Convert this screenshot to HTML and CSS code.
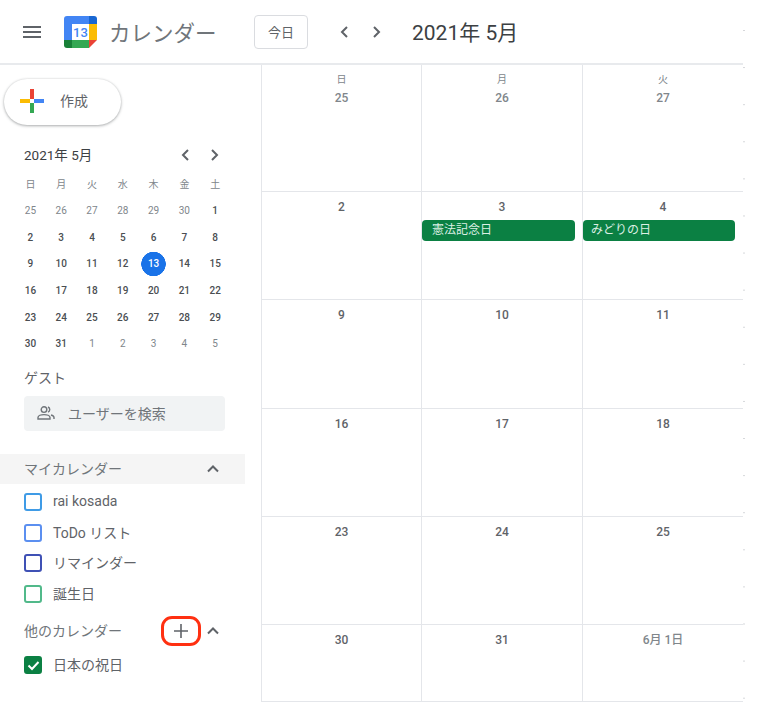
FILE: index.html
```html
<!DOCTYPE html>
<html lang="ja">
<head>
    <meta charset="utf-8">
    <title>カレンダー</title>
    <link rel="stylesheet" href="styles.css">
</head>
<body>
    <div class="app">
        <div class="content">
            <header class="topbar">
                <svg class="menu-icon" width="18" height="12" viewBox="0 0 18 12"><path d="M0 0h18v2H0zM0 5h18v2H0zM0 10h18v2H0z" fill="#5f6368"/></svg>
                <svg class="logo" width="33" height="32" viewBox="0 0 33 32">
                    <path d="M3 0h22v8H8v16H0V3a3 3 0 0 1 3-3z" fill="#4285f4"/>
                    <path d="M25 0h5a3 3 0 0 1 3 3v5h-8z" fill="#1967d2"/>
                    <path d="M25 8h8v16h-8z" fill="#fbbc04"/>
                    <path d="M8 24h17v8H8z" fill="#34a853"/>
                    <path d="M0 24h8v8H3a3 3 0 0 1-3-3z" fill="#188038"/>
                    <path d="M25 24h8l-8 8z" fill="#ea4335"/>
                    <path d="M8 8h17v16H8z" fill="#fff"/>
                    <text x="16.5" y="21" text-anchor="middle" class="logo-num">13</text>
                </svg>
                <span class="app-name">カレンダー</span>
                <button class="today-btn">今日</button>
                <svg class="nav-chevron first" width="8" height="12" viewBox="0 0 8 12"><path d="M7 1L2 6l5 5" class="chevron-line"/></svg>
                <svg class="nav-chevron" width="8" height="12" viewBox="0 0 8 12"><path d="M1 1l5 5-5 5" class="chevron-line"/></svg>
                <span class="month-title">2021年 5月</span>
            </header>

            <div class="main">
                <aside class="sidebar">
                    <button class="create-btn">
                        <svg width="24" height="24" viewBox="0 0 24 24">
                            <path d="M10 10h4V0h-4z" fill="#ea4335"/>
                            <path d="M14 10v4h10v-4z" fill="#4285f4"/>
                            <path d="M10 14h4v10h-4z" fill="#34a853"/>
                            <path d="M0 10v4h10v-4z" fill="#fbbc04"/>
                        </svg>
                        <span class="create-label">作成</span>
                    </button>

                    <div class="mini-head">
                        <span class="mini-title">2021年 5月</span>
                        <svg width="8" height="12" viewBox="0 0 8 12"><path d="M7 1L2 6l5 5" class="chevron-line"/></svg>
                        <svg width="8" height="12" viewBox="0 0 8 12"><path d="M1 1l5 5-5 5" class="chevron-line"/></svg>
                    </div>
                    <div class="mini-grid">
                        <span class="wd">日</span><span class="wd">月</span><span class="wd">火</span><span class="wd">水</span><span class="wd">木</span><span class="wd">金</span><span class="wd">土</span>
                        <span class="off">25</span><span class="off">26</span><span class="off">27</span><span class="off">28</span><span class="off">29</span><span class="off">30</span><span>1</span>
                        <span>2</span><span>3</span><span>4</span><span>5</span><span>6</span><span>7</span><span>8</span>
                        <span>9</span><span>10</span><span>11</span><span>12</span><span class="today">13</span><span>14</span><span>15</span>
                        <span>16</span><span>17</span><span>18</span><span>19</span><span>20</span><span>21</span><span>22</span>
                        <span>23</span><span>24</span><span>25</span><span>26</span><span>27</span><span>28</span><span>29</span>
                        <span>30</span><span>31</span><span class="off">1</span><span class="off">2</span><span class="off">3</span><span class="off">4</span><span class="off">5</span>
                    </div>

                    <div class="guest-label">ゲスト</div>
                    <div class="guest-search">
                        <svg width="18" height="14" viewBox="0 0 18 14" fill="none" stroke="#70757a" stroke-width="1.4">
                            <circle cx="7" cy="3.6" r="2.8"/>
                            <path d="M1 13v-1.4C1 9.8 4 8.6 7 8.6s6 1.2 6 3V13z"/>
                            <path d="M11 1a2.8 2.8 0 0 1 0 5.2M14 9c1.6.5 3 1.3 3 2.6V13"/>
                        </svg>
                        <span>ユーザーを検索</span>
                    </div>

                    <div class="section-head active">
                        <span>マイカレンダー</span>
                        <svg class="up-chevron" width="12" height="8" viewBox="0 0 12 8"><path d="M1 6.5l5-5 5 5" class="chevron-line"/></svg>
                    </div>
                    <ul class="cal-list">
                        <li><i class="check sky"></i>rai kosada</li>
                        <li><i class="check blue"></i>ToDo リスト</li>
                        <li><i class="check indigo"></i>リマインダー</li>
                        <li><i class="check mint"></i>誕生日</li>
                    </ul>

                    <div class="section-head other">
                        <span>他のカレンダー</span>
                        <div class="add-btn">
                            <svg width="14" height="14" viewBox="0 0 14 14"><path d="M6.2 0h1.6v14H6.2zM0 6.2h14v1.6H0z" fill="#5f6368"/></svg>
                        </div>
                        <svg class="up-chevron" width="12" height="8" viewBox="0 0 12 8"><path d="M1 6.5l5-5 5 5" class="chevron-line"/></svg>
                    </div>
                    <ul class="cal-list holidays">
                        <li>
                            <i class="check green">
                                <svg width="13" height="11" viewBox="0 0 13 11"><path d="M1.5 5.5l3.5 3.5 6.5-7" fill="none" stroke="#fff" stroke-width="2"/></svg>
                            </i>日本の祝日
                        </li>
                    </ul>
                </aside>

                <section class="month">
                    <div class="cell first-row"><span class="wk">日</span><span class="date off">25</span></div>
                    <div class="cell first-row"><span class="wk">月</span><span class="date off">26</span></div>
                    <div class="cell first-row"><span class="wk">火</span><span class="date off">27</span></div>

                    <div class="cell"><span class="date">2</span></div>
                    <div class="cell"><span class="date">3</span><div class="event">憲法記念日</div></div>
                    <div class="cell"><span class="date">4</span><div class="event short">みどりの日</div></div>

                    <div class="cell"><span class="date">9</span></div>
                    <div class="cell"><span class="date">10</span></div>
                    <div class="cell"><span class="date">11</span></div>

                    <div class="cell"><span class="date">16</span></div>
                    <div class="cell"><span class="date">17</span></div>
                    <div class="cell"><span class="date">18</span></div>

                    <div class="cell"><span class="date">23</span></div>
                    <div class="cell"><span class="date">24</span></div>
                    <div class="cell"><span class="date">25</span></div>

                    <div class="cell"><span class="date">30</span></div>
                    <div class="cell"><span class="date">31</span></div>
                    <div class="cell"><span class="date off">6月 1日</span></div>
                </section>
            </div>
        </div>
        <div class="edge-dots"></div>
    </div>
</body>
</html>
```

FILE: styles.css
```css
* {
    box-sizing: border-box;
}

body {
    margin: 0;
    background-color: #fff;
    color: #5f6368;
    font-family: 'Roboto', 'Noto Sans CJK JP', sans-serif;
    overflow: hidden;
}

.app {
    display: flex;
    width: 774px;
    height: 702px;
    overflow: hidden;
}

.content {
    width: 743px;
    flex-shrink: 0;
}

.edge-dots {
    width: 2px;
    height: 702px;
    background-image: linear-gradient(to bottom, #d5d7da 1px, transparent 1px);
    background-size: 2px 37.1px;
    background-position: 0 30px;
}

.chevron-line {
    fill: none;
    stroke: #5f6368;
    stroke-width: 2;
}

/* top bar */
.topbar {
    height: 65px;
    display: flex;
    align-items: center;
    padding-left: 23px;
    border-bottom: 2px solid #e8eaed;
}

.logo {
    margin-left: 23px;
}

.logo-num {
    font-size: 13px;
    font-weight: 500;
    fill: #4285f4;
}

.app-name {
    width: 145px;
    margin-left: 12px;
    font-size: 21.5px;
    color: #70757a;
}

.today-btn {
    width: 54px;
    height: 34px;
    padding: 0;
    background: #fff;
    border: 1px solid #dadce0;
    border-radius: 4px;
    font-family: inherit;
    font-size: 13px;
    color: #5f6368;
}

.nav-chevron {
    margin-left: 25px;
}

.nav-chevron.first {
    margin-left: 32px;
}

.month-title {
    margin: 0 0 2px 31px;
    font-size: 21px;
    color: #3c4043;
}

.main {
    display: flex;
    height: 637px;
}

/* sidebar */
.sidebar {
    width: 261px;
    flex-shrink: 0;
}

.create-btn {
    display: flex;
    align-items: center;
    gap: 16px;
    width: 117px;
    height: 46px;
    margin: 14px 0 0 4px;
    padding: 0 0 2px 16px;
    background: #fff;
    border: none;
    border-radius: 23px;
    box-shadow: 0 1px 3px rgba(60,64,67,0.4), 0 0 2px rgba(60,64,67,0.15);
    font-family: inherit;
    font-size: 14px;
    color: #5f6368;
}

.create-label {
    margin-bottom: 2px;
}

.mini-head {
    display: flex;
    align-items: center;
    height: 20px;
    margin-top: 20px;
    padding-left: 24px;
}

.mini-title {
    width: 157px;
    margin-bottom: 2px;
    font-size: 13.5px;
    color: #3c4043;
}

.mini-head svg + svg {
    margin-left: 22px;
}

.mini-grid {
    display: grid;
    grid-template-columns: repeat(7, 30.8px);
    grid-auto-rows: 26.7px;
    margin: 5.5px 0 0 15px;
    font-size: 10px;
    font-weight: 500;
    color: #4a4e52;
}

.mini-grid span {
    display: flex;
    align-items: center;
    justify-content: center;
}

.mini-grid .wd,
.mini-grid .off {
    font-weight: 400;
    color: #80868b;
}

.mini-grid .today {
    color: #fff;
    background: radial-gradient(circle at center, #1a73e8 12px, transparent 12.5px);
}

.guest-label {
    margin: 11.5px 0 0 24px;
    font-size: 14px;
    line-height: 19px;
}

.guest-search {
    display: flex;
    align-items: center;
    gap: 13px;
    width: 201px;
    height: 35px;
    margin: 8px 0 0 24px;
    padding-left: 13px;
    background-color: #f1f3f4;
    border-radius: 4px;
    font-size: 14px;
    color: #70757a;
}

.section-head {
    display: flex;
    align-items: center;
    justify-content: space-between;
    width: 245px;
    height: 30px;
    padding: 0 26px 0 24px;
    font-size: 14px;
    color: #70757a;
}

.section-head span {
    margin-bottom: 2px;
}

.section-head.active {
    margin-top: 23px;
    background-color: #f5f5f5;
}

.section-head.other {
    margin-top: 7px;
}

.section-head.other span {
    width: 130px;
}

.add-btn {
    display: flex;
    align-items: center;
    justify-content: center;
    width: 40px;
    height: 30px;
    border: 3px solid #ff3011;
    border-radius: 11px;
}

.cal-list {
    list-style: none;
    margin: 3px 0 0;
    padding: 0;
}

.cal-list.holidays {
    margin-top: 4px;
}

.cal-list li {
    display: flex;
    align-items: center;
    gap: 11px;
    height: 30.5px;
    padding: 0 0 2px 24px;
    font-size: 14px;
    color: #5f6368;
}

.check {
    display: flex;
    align-items: center;
    justify-content: center;
    width: 18px;
    height: 18px;
    margin-top: 2px;
    border: 2px solid;
    border-radius: 3px;
}

.check.sky { border-color: #3f9be6; }
.check.blue { border-color: #5b8ff0; }
.check.indigo { border-color: #3f51b5; }
.check.mint { border-color: #51b98a; }
.check.green { border-color: #0b8043; background-color: #0b8043; }

/* month grid */
.month {
    width: 482px;
    flex-shrink: 0;
    display: grid;
    grid-template-columns: 160px 161px 161px;
    grid-template-rows: 127px 108px 109px 108px 108px 77px;
}

.cell {
    display: flex;
    flex-direction: column;
    align-items: center;
    padding-top: 8px;
    border-left: 1px solid #e4e6ea;
    border-bottom: 1px solid #e4e6ea;
    font-size: 12px;
}

.wk {
    font-size: 10px;
    line-height: 14px;
    color: #80868b;
}

.date {
    font-weight: 500;
    line-height: 15px;
    color: #5f6368;
}

.first-row .date {
    margin-top: 4px;
}

.date.off {
    color: #80868b;
}

.event {
    align-self: flex-start;
    width: 153px;
    height: 21px;
    margin-top: 5px;
    padding-left: 10px;
    background-color: #0b8043;
    border-radius: 4px;
    font-size: 12px;
    line-height: 20px;
    color: #dcefe4;
}

.event.short {
    width: 152px;
    padding-left: 8px;
}
```
